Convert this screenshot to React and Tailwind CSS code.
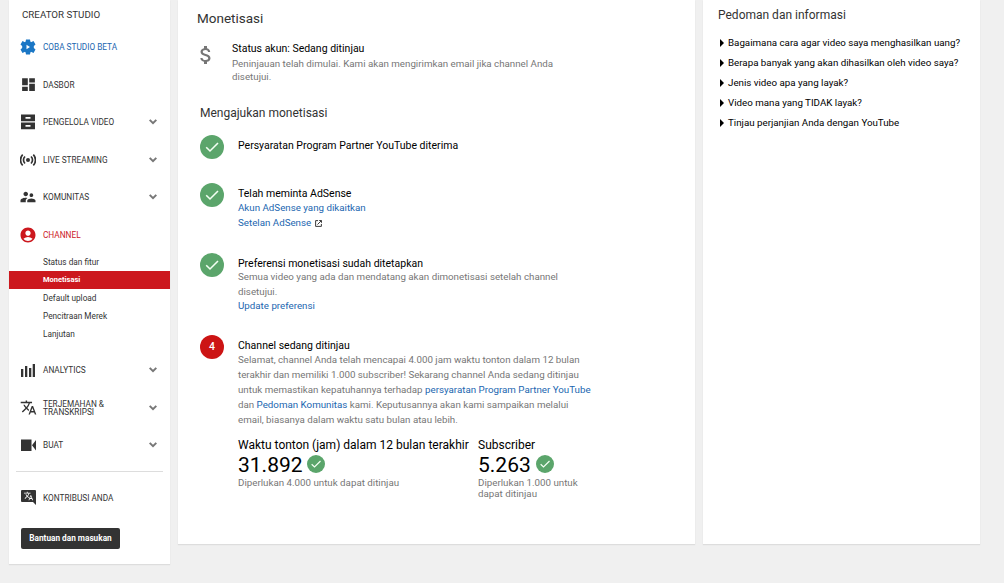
import React from 'react';
import {
	MdDashboard,
	MdSupervisorAccount,
	MdAccountCircle,
	MdTranslate,
	MdAttachMoney,
} from 'react-icons/md';

function GearIcon() {
	return (
		<svg viewBox="0 0 16 16" className="w-4 h-4" fill="#1b77c5">
			<circle cx="8" cy="8" r="5.8" />
			<path d="M6 0.500h4l0.600 3h-5.200zM6 15.500h4l0.600-3h-5.200zM0.500 5.500l2-3.400 3 1.400-2.600 4.300zM15.500 5.500l-2-3.400-3 1.400 2.600 4.300zM0.500 10.500l2 3.400 3-1.400-2.600-4.300zM15.500 10.500l-2 3.400-3-1.400 2.600-4.300z" />
			<path d="M6.500 5.800v4.400L10 8z" fill="#fff" />
		</svg>
	);
}

function DrawerIcon() {
	return (
		<svg viewBox="0 0 14 16" className="w-[14px] h-4" fill="currentColor">
			<path fillRule="evenodd" d="M0 0.500h14v6.800H0zM4.500 3v1.800h5V3z" />
			<path fillRule="evenodd" d="M0 8.500h14v6.800H0zM4.500 11v1.800h5V11z" />
		</svg>
	);
}

function LiveIcon() {
	return (
		<svg viewBox="0 0 16 12" className="w-4 h-3" fill="none" stroke="currentColor" strokeWidth="1.7">
			<circle cx="8" cy="6" r="2" fill="currentColor" stroke="none" />
			<path d="M5 2.500a4.800 4.800 0 0 0 0 7M11 2.500a4.800 4.800 0 0 1 0 7M2.700 0.700a7.500 7.500 0 0 0 0 10.600M13.300 0.700a7.500 7.500 0 0 1 0 10.600" />
		</svg>
	);
}

function BarsIcon() {
	return (
		<svg viewBox="0 0 14 13" className="w-[14px] h-[13px]" fill="currentColor">
			<path d="M0 5h2.300v8H0zM4 2h2.300v11H4zM8 4h2.300v9H8zM11.700 0H14v13h-2.300z" />
		</svg>
	);
}

function CameraIcon() {
	return (
		<svg viewBox="0 0 15 12" className="w-[15px] h-3" fill="currentColor">
			<path d="M0 0.500h10.500V12H0zM11 6.200L15 1v10.500z" />
		</svg>
	);
}

function ContributeIcon() {
	return (
		<svg viewBox="0 0 15 15" className="w-[15px] h-[15px]">
			<path d="M1 0h13a1 1 0 0 1 1 1v14l-3-3H1a1 1 0 0 1-1-1V1a1 1 0 0 1 1-1z" fill="#333" />
			<MdTranslate x="2.500" y="1" size="10" color="#fff" />
		</svg>
	);
}

function Chevron() {
	return (
		<svg viewBox="0 0 8 6" className="w-2 h-1.5" fill="none" stroke="#777" strokeWidth="2">
			<path d="M0.700 0.900L4 4.200L7.300 0.900" />
		</svg>
	);
}

function CheckBadge({ small }) {
	return (
		<svg viewBox="0 0 24 24" className={small ? 'w-[18px] h-[18px] -mt-[3px] shrink-0' : 'w-6 h-6 shrink-0'}>
			<circle cx="12" cy="12" r="12" fill="#5ba56b" />
			<path d="M6.200 12.300L10 16L18 8" fill="none" stroke="#f3fff3" strokeWidth="1.600" />
		</svg>
	);
}

function ExternalIcon() {
	return (
		<svg viewBox="0 0 8 8" className="w-[7px] h-[7px] mt-px" fill="none" stroke="#333" strokeWidth="1.1">
			<path d="M3.500 0.700H0.700v6.600H7.300V4.500M4.800 0.600h2.600v2.600M7.200 0.800L2.800 5.200" />
		</svg>
	);
}

const topItems = [
	{ label: 'COBA STUDIO BETA', icon: <GearIcon />, color: 'text-[#2166b0]' },
	{ label: 'DASBOR', icon: <MdDashboard size={17} /> },
	{ label: 'PENGELOLA VIDEO', icon: <DrawerIcon />, more: true },
	{ label: 'LIVE STREAMING', icon: <LiveIcon />, more: true },
	{ label: 'KOMUNITAS', icon: <MdSupervisorAccount size={18} />, more: true },
	{ label: 'CHANNEL', icon: <MdAccountCircle size={18} color="#cc181e" />, color: 'text-[#cc181e]' },
];

const channelItems = ['Status dan fitur', 'Monetisasi', 'Default upload', 'Pencitraan Merek', 'Lanjutan'];

const bottomItems = [
	{ label: 'ANALYTICS', icon: <BarsIcon />, more: true },
	{ label: <>TERJEMAHAN &amp;<br />TRANSKRIPSI</>, icon: <MdTranslate size={17} />, more: true },
	{ label: 'BUAT', icon: <CameraIcon />, more: true },
];

const questions = [
	'Bagaimana cara agar video saya menghasilkan uang?',
	'Berapa banyak yang akan dihasilkan oleh video saya?',
	'Jenis video apa yang layak?',
	'Video mana yang TIDAK layak?',
	'Tinjau perjanjian Anda dengan YouTube',
];

function NavItem({ item }) {
	return (
		<div className="flex items-center h-[37.5px] pl-[9px] pr-[13px]">
			<div className="w-5 flex justify-center shrink-0">{item.icon}</div>
			<span className={`ml-[5px] flex-1 text-[8.25px] leading-2 ${item.color || ''}`}>{item.label}</span>
			{item.more && <Chevron />}
		</div>
	);
}

function Sidebar() {
	return (
		<aside className="w-[161px] h-[564px] shrink-0 bg-white text-[#333] shadow-[0_1px_1px_#ddd]">
			<h2 className="h-[28.5px] pt-2 pl-[13px] text-[9.75px] leading-[14px]">CREATOR STUDIO</h2>
			{topItems.map((item, index) => (
				<NavItem key={index} item={item} />
			))}
			<ul className="-mt-px text-[8.25px] leading-[18px] mb-[9px]">
				{channelItems.map((label) => (
					<li
						key={label}
						className={`h-[18px] pl-[34px] ${label === 'Monetisasi' ? 'bg-[#cc181e] text-white text-[7.5px] font-bold' : ''}`}
					>
						{label}
					</li>
				))}
			</ul>
			{bottomItems.map((item, index) => (
				<NavItem key={index} item={item} />
			))}
			<hr className="mx-[7px] mt-[7px] mb-[7px] border-[#ddd]" />
			<NavItem item={{ label: 'KONTRIBUSI ANDA', icon: <ContributeIcon /> }} />
			<button className="mt-[11px] ml-3 w-[99px] h-[21px] rounded-xs bg-[#333] text-white text-[8.25px] font-bold">
				Bantuan dan masukan
			</button>
		</aside>
	);
}

function Step({ badge, title, height, children }) {
	return (
		<div className={`flex ${height}`}>
			{badge}
			<div className="ml-[14px] pt-1">
				<h4 className="text-[10.5px] leading-[13px] text-black">{title}</h4>
				<div className="text-[9.75px] leading-[15px] text-[#767676] whitespace-nowrap">{children}</div>
			</div>
		</div>
	);
}

function Monetization() {
	return (
		<main className="w-[517px] h-[544px] shrink-0 bg-white pl-[22px] shadow-[0_1px_1px_#ddd]">
			<h1 className="-ml-[3px] pt-[9px] text-[13.5px] leading-[18px] text-[#333]">Monetisasi</h1>
			<div className="flex pt-[14px] h-[77px] -ml-[6px]">
				<MdAttachMoney size={24} color="#767676" className="mt-0.5" />
				<div className="ml-[14px]">
					<h4 className="pt-px text-[10.5px] leading-[14px] text-black">Status akun: Sedang ditinjau</h4>
					<p className="mt-px text-[9.75px] leading-[13px] text-[#767676] whitespace-nowrap">
						Peninjauan telah dimulai. Kami akan mengirimkan email jika channel Anda<br />disetujui.
					</p>
				</div>
			</div>
			<h2 className="text-[12px] leading-[18px] text-[#333] mb-[13px]">Mengajukan monetisasi</h2>

			<Step badge={<CheckBadge />} title="Persyaratan Program Partner YouTube diterima" height="h-12" />
			<Step badge={<CheckBadge />} title="Telah meminta AdSense" height="h-[70px]">
				<a className="block text-[#2166b0]">Akun AdSense yang dikaitkan</a>
				<a className="flex items-center gap-1 text-[#2166b0]">Setelan AdSense <ExternalIcon /></a>
			</Step>
			<Step badge={<CheckBadge />} title="Preferensi monetisasi sudah ditetapkan" height="h-[82px]">
				<p className="-mt-px">Semua video yang ada dan mendatang akan dimonetisasi setelah channel<br />disetujui.</p>
				<a className="block -mt-px text-[#2166b0]">Update preferensi</a>
			</Step>
			<Step
				badge={
					<div className="w-6 h-6 shrink-0 rounded-full bg-[#cc1414] text-white text-[10.5px] font-medium flex items-center justify-center">4</div>
				}
				title="Channel sedang ditinjau"
				height="h-[102px]"
			>
				Selamat, channel Anda telah mencapai 4.000 jam waktu tonton dalam 12 bulan<br />
				terakhir dan memiliki 1.000 subscriber! Sekarang channel Anda sedang ditinjau<br />
				untuk memastikan kepatuhannya terhadap <a className="text-[#2166b0]">persyaratan Program Partner YouTube</a><br />
				dan <a className="text-[#2166b0]">Pedoman Komunitas</a> kami. Keputusannya akan kami sampaikan melalui<br />
				email, biasanya dalam waktu satu bulan atau lebih.
			</Step>

			{/* Watch time and subscriber totals */}
			<div className="flex ml-[38px] text-black whitespace-nowrap">
				<div className="w-[240px]">
					<h4 className="text-[12px] leading-4">Waktu tonton (jam) dalam 12 bulan terakhir</h4>
					<div className="flex items-center gap-1 text-[21px] leading-[24px]">31.892 <CheckBadge small /></div>
					<p className="text-[9.75px] leading-[11px] text-[#767676]">Diperlukan 4.000 untuk dapat ditinjau</p>
				</div>
				<div>
					<h4 className="text-[12px] leading-4">Subscriber</h4>
					<div className="flex items-center gap-[5px] text-[21px] leading-[24px]">5.263 <CheckBadge small /></div>
					<p className="text-[9.75px] leading-[11px] text-[#767676]">Diperlukan 1.000 untuk<br />dapat ditinjau</p>
				</div>
			</div>
		</main>
	);
}

function Guidelines() {
	return (
		<section className="w-[277px] h-[544px] shrink-0 bg-white pl-[15px] pt-[6px] shadow-[0_1px_1px_#ddd]">
			<h2 className="text-[12px] leading-[18px] text-[#333] mb-[9px]">Pedoman dan informasi</h2>
			<ul className="text-[9.75px] leading-5 text-black whitespace-nowrap">
				{questions.map((question) => (
					<li key={question} className="flex items-center pl-0.5">
						<svg viewBox="0 0 4 8" className="w-1 h-2 mr-1"><path d="M0 0L4 4L0 8z" /></svg>
						{question}
					</li>
				))}
			</ul>
		</section>
	);
}

export default function App() {
	return (
		<div className="flex items-start gap-2 pl-[9px] w-[1004px] h-[583px] overflow-hidden bg-[#f0f0f0] font-[Roboto,sans-serif]">
			<Sidebar />
			<Monetization />
			<Guidelines />
		</div>
	);
}
